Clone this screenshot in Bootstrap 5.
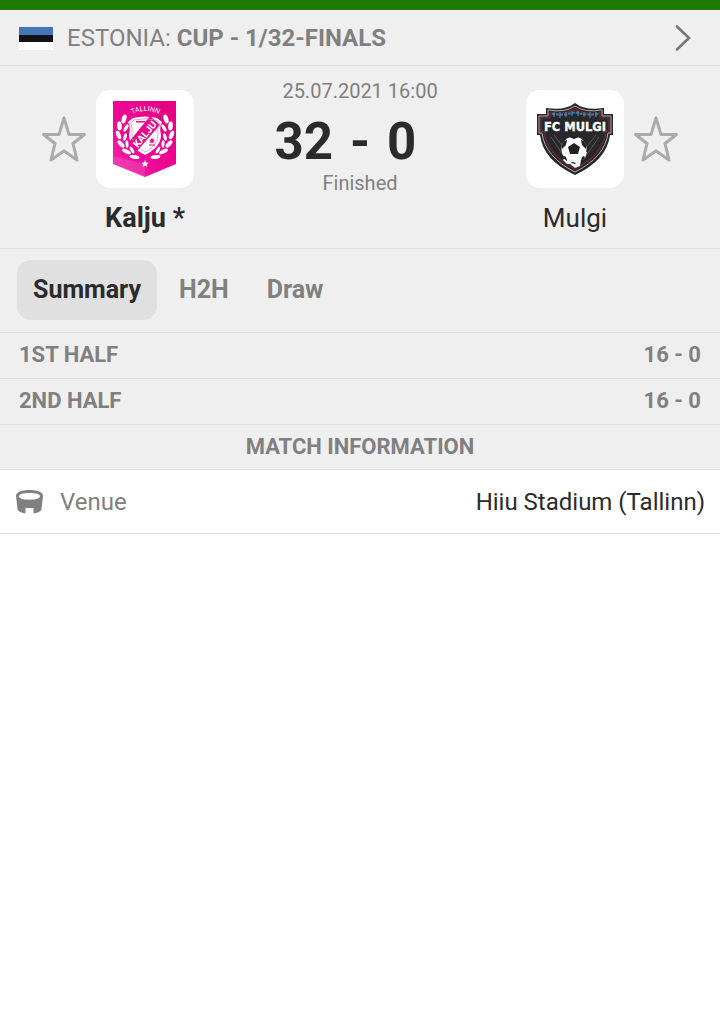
<!DOCTYPE html>
<html lang="en">
<head>
<meta charset="utf-8">
<meta name="viewport" content="width=device-width, initial-scale=1">
<title>Kalju - Mulgi</title>
<link href="https://cdn.jsdelivr.net/npm/bootstrap@5.3.0/dist/css/bootstrap.min.css" rel="stylesheet">
<style>
  body { font-family: Roboto, "Liberation Sans", sans-serif; color: #2b2b2b; background: #fff; font-size: 24px; line-height: 32px; }
  .top-strip { height: 10px; background: #1e7a00; }
  .panel { background: #efefef; }
  .rule { border-bottom: 1px solid #dedede; }
  .muted { color: #808080; }
  .league { height: 56px; padding: 0 28px 0 19px; color: #808080; text-decoration: none; }
  .league-name { margin-left: 14px; }
  .match { display: grid; grid-template-columns: 1fr 140px 1fr; height: 183px; }
  .team { padding-top: 24px; }
  .team-head { display: grid; grid-template-columns: 1fr 98px 1fr; column-gap: 10px; align-items: center; }
  .crest { height: 98px; border-radius: 14px; background: #fff; }
  .team-name { font-size: 26px; margin-top: 14px; }
  .team-name.fw-bold { font-size: 27px; }
  .star { line-height: 0; }
  .result { padding-top: 12px; font-size: 20px; line-height: 26px; white-space: nowrap; }
  .score { display: grid; grid-template-columns: 80px 20px 80px; column-gap: 17px; margin: 11px 0 1px; font-size: 51px; line-height: 54px; font-weight: 700; color: #2b2b2b; }
  .tab-bar { height: 84px; padding: 11px 17px 12px; }
  .tab-bar .nav-link { color: #808080; font-weight: 700; font-size: 25px; line-height: 32px; padding: 14px 16px; border-radius: 14px; }
  .tab-bar .nav-link + .nav-link { margin-left: 6px; }
  .tab-bar .nav-link.active { color: #2b2b2b; background: #e0e0e0; }
  .half { height: 46px; padding: 0 19px 2px; font-size: 22px; font-weight: 700; }
  .info-title { height: 45px; font-size: 22px; font-weight: 700; margin: 0; }
  .info-row { height: 64px; padding: 0 15px; font-size: 24px; }
  .info-label { margin-left: 16px; }
</style>
</head>
<body>
<div class="top-strip"></div>
<main>
  <section class="panel">
    <a href="#" class="league rule d-flex align-items-center">
      <svg width="34" height="24" viewBox="0 0 34 24" aria-hidden="true"><path fill="#fff" d="M0 1h34v23H0z"/><path fill="#4575b8" d="M0 1h34v8H0z"/><path fill="#111416" d="M0 9h34v7H0z"/></svg>
      <span class="league-name">ESTONIA: <strong>CUP - 1/32-FINALS</strong></span>
      <svg class="ms-auto" width="18" height="28" viewBox="0 0 18 28" fill="none" stroke="#777" stroke-width="2.6" stroke-linecap="round" stroke-linejoin="miter" aria-hidden="true"><path d="M3 2.500 15 14 3 25.500"/></svg>
    </a>

    <div class="match rule">
      <div class="team text-center">
        <div class="team-head">
          <button type="button" class="star btn p-0 border-0 ms-auto" aria-label="Follow Kalju">
            <svg width="44" height="48" viewBox="0 0 44 48" fill="none" stroke="#aaa" stroke-width="3" stroke-linejoin="round"><path d="M22 3 27 19.500H42.500L31 28.500 35 45 22 36 9 45 13 28.500 1.500 19.500H17z"/></svg>
          </button>
          <div class="crest">
            <svg width="98" height="98" viewBox="0 0 98 98" aria-label="Kalju crest">
              <defs>
                <linearGradient id="pink" x1="0" y1="1" x2="1" y2="0"><stop offset="0" stop-color="#f32aac"/><stop offset=".35" stop-color="#ef0a99"/><stop offset="1" stop-color="#e4007e"/></linearGradient>
                <path id="arc" d="M32 26Q49 16 67 26"/>
                <g id="laurel" fill="#fff">
                  <ellipse cx="28" cy="29" rx="2.300" ry="4.500" transform="rotate(18 28 29)"/>
                  <ellipse cx="23.500" cy="36" rx="2.300" ry="4.500" transform="rotate(-5 23.500 36)"/>
                  <ellipse cx="30" cy="38" rx="1.700" ry="4" transform="rotate(30 30 38)"/>
                  <ellipse cx="22.500" cy="45" rx="2.200" ry="4.500" transform="rotate(-22 22.500 45)"/>
                  <ellipse cx="29" cy="47" rx="1.600" ry="3.800" transform="rotate(15 29 47)"/>
                  <ellipse cx="25" cy="54" rx="2.100" ry="4.500" transform="rotate(-43 25 54)"/>
                  <ellipse cx="31" cy="54" rx="1.500" ry="3.800" transform="rotate(-5 31 54)"/>
                  <ellipse cx="30.500" cy="61.500" rx="2" ry="4.800" transform="rotate(-65 30.500 61.500)"/>
                  <ellipse cx="36" cy="60" rx="1.500" ry="3.800" transform="rotate(-28 36 60)"/>
                  <ellipse cx="38.500" cy="67" rx="1.900" ry="5" transform="rotate(-82 38.500 67)"/>
                </g>
              </defs>
              <path fill="url(#pink)" d="M17 11H80V74L49 87 17 74z"/>
              <path fill="#fff" opacity=".12" d="M17 66 49 74V87L17 74z"/>
              <text font-size="7" fill="#fff" text-anchor="middle"><textPath href="#arc" startOffset="50%">TALLINN</textPath></text>
              <use href="#laurel"/><use href="#laurel" transform="matrix(-1 0 0 1 98 0)"/>
              <path fill="#fff" d="M37 28Q49 25 61 28L66 32Q63 37 65 45Q65 57 49 65Q33 57 33 45Q35 37 32 32z"/>
              <path fill="#e60a8a" d="M33 52 54 26 64 35 41 61Q35 57 33 52z"/>
              <path fill="none" stroke="#ef78be" stroke-width=".7" d="M38 30Q49 27.500 60 30L63.500 33Q61 38 62 45Q62 55 49 62Q36 55 36 45Q37 38 34.500 33z"/>
              <text font-size="10" font-weight="700" fill="#fff" text-anchor="middle" transform="translate(51.500 46.500) rotate(-50)">KALJU</text>
              <path fill="#e60a8a" d="m56 47.500 1 2 2 .3-1.500 1.400.4 2.200-1.900-1-1.900 1 .4-2.200-1.500-1.400 2-.3zM53 54.500h6v1h-6zM40 31h9v1.500h-9z"/>
              <path fill="#fff" d="m49 70 1.100 2.400 2.700.3-2 1.800.6 2.600-2.400-1.300-2.400 1.300.6-2.600-2-1.800 2.700-.3z"/>
            </svg>
          </div>
        </div>
        <div class="team-name fw-bold">Kalju *</div>
      </div>

      <div class="result muted d-flex flex-column align-items-center">
        <time datetime="2021-07-25T16:00">25.07.2021 16:00</time>
        <div class="score">
          <span class="text-end">32</span><span class="text-center">-</span><span>0</span>
        </div>
        <span>Finished</span>
      </div>

      <div class="team text-center">
        <div class="team-head">
          <span></span>
          <div class="crest">
            <svg width="98" height="98" viewBox="0 0 98 98" aria-label="Mulgi crest">
              <path fill="#262629" d="M11 24H20V18Q39 21 49 13Q59 21 78 18V24H87V45H84Q81 70 49 85Q17 70 14 45H11z"/>
              <path fill="none" stroke="#aeb0b4" stroke-width="1" d="M13 26H22V20Q39 23 49 16Q59 23 76 20V26H85V43H82Q79 67 49 82Q19 67 16 43H13z"/>
              <path fill="#28282a" stroke="#6b2734" stroke-width="1.500" d="M15 28H24V23Q39 25 49 19Q59 25 74 23V28H83V41H80Q77 65 49 79Q21 65 18 41H15z"/>
              <path fill="none" stroke="#3a789d" stroke-width="2" stroke-dasharray="3 1" d="M26 24Q39 26 49 22Q59 26 72 24"/>
              <path fill="none" stroke="#4a92bd" stroke-width="1" d="M28 22v5M34 22v6M40 22v5M46 21v5M52 21v5M58 22v5M64 22v6M70 22v5"/>
              <path stroke="#59595c" stroke-width="1" fill="none" d="m25 47 16 24M28 45 42 63M73 47 57 70M70 45 58 60"/>
              <text x="49" y="41" text-anchor="middle" font-family="DejaVu Sans, sans-serif" font-weight="700" font-size="11.500" fill="#fff" stroke="#fff" stroke-width=".3">FC MULGI</text>
              <path fill="#f4f4f4" d="M37 70 40 66 37 64 41 62 61 62 59 68 55 70 54 76 49 78 44 74 41 74z"/>
              <circle cx="48" cy="59" r="12.500" fill="#fff"/>
              <path fill="#222225" d="m48 53 6 4-2 7h-8l-2-7zM43 47l5 2 5-2-2-1h-6zM36 55l2-4 3-1-1 5-4 4zM60 55l-2-4-3-1 1 5 4 4zM38 66l2 1 1 4-4-3zM58 66l-2 1-1 4 4-3zM46 72l4 1-1 1-4-1z"/>
            </svg>
          </div>
          <button type="button" class="star btn p-0 border-0 me-auto" aria-label="Follow Mulgi">
            <svg width="44" height="48" viewBox="0 0 44 48" fill="none" stroke="#aaa" stroke-width="3" stroke-linejoin="round"><path d="M22 3 27 19.500H42.500L31 28.500 35 45 22 36 9 45 13 28.500 1.500 19.500H17z"/></svg>
          </button>
        </div>
        <div class="team-name">Mulgi</div>
      </div>
    </div>

    <nav class="tab-bar rule nav nav-pills">
      <a class="nav-link active" href="#" aria-current="page">Summary</a>
      <a class="nav-link" href="#">H2H</a>
      <a class="nav-link" href="#">Draw</a>
    </nav>

    <div class="half rule muted d-flex justify-content-between align-items-center"><span>1ST HALF</span><span>16 - 0</span></div>
    <div class="half rule muted d-flex justify-content-between align-items-center"><span>2ND HALF</span><span>16 - 0</span></div>
    <h2 class="info-title rule muted d-flex justify-content-center align-items-center">MATCH INFORMATION</h2>
  </section>

  <div class="info-row rule d-flex align-items-center">
    <svg width="29" height="26" viewBox="0 0 29 26" aria-hidden="true"><path fill="#808080" fill-rule="evenodd" d="M1 7C1 3 7 1 14.500 1S28 3 28 7L26.500 20Q26 23 18.500 24.500V19H10.500V24.500Q3 23 2.500 20zM14.500 4C8 4 4 5.200 4 7.300S8 10.700 14.500 10.700 25 9.500 25 7.300 21 4 14.500 4z"/></svg>
    <span class="info-label muted">Venue</span>
    <span class="ms-auto">Hiiu Stadium (Tallinn)</span>
  </div>
</main>
<script src="https://cdn.jsdelivr.net/npm/bootstrap@5.3.0/dist/js/bootstrap.bundle.min.js"></script>
</body>
</html>
